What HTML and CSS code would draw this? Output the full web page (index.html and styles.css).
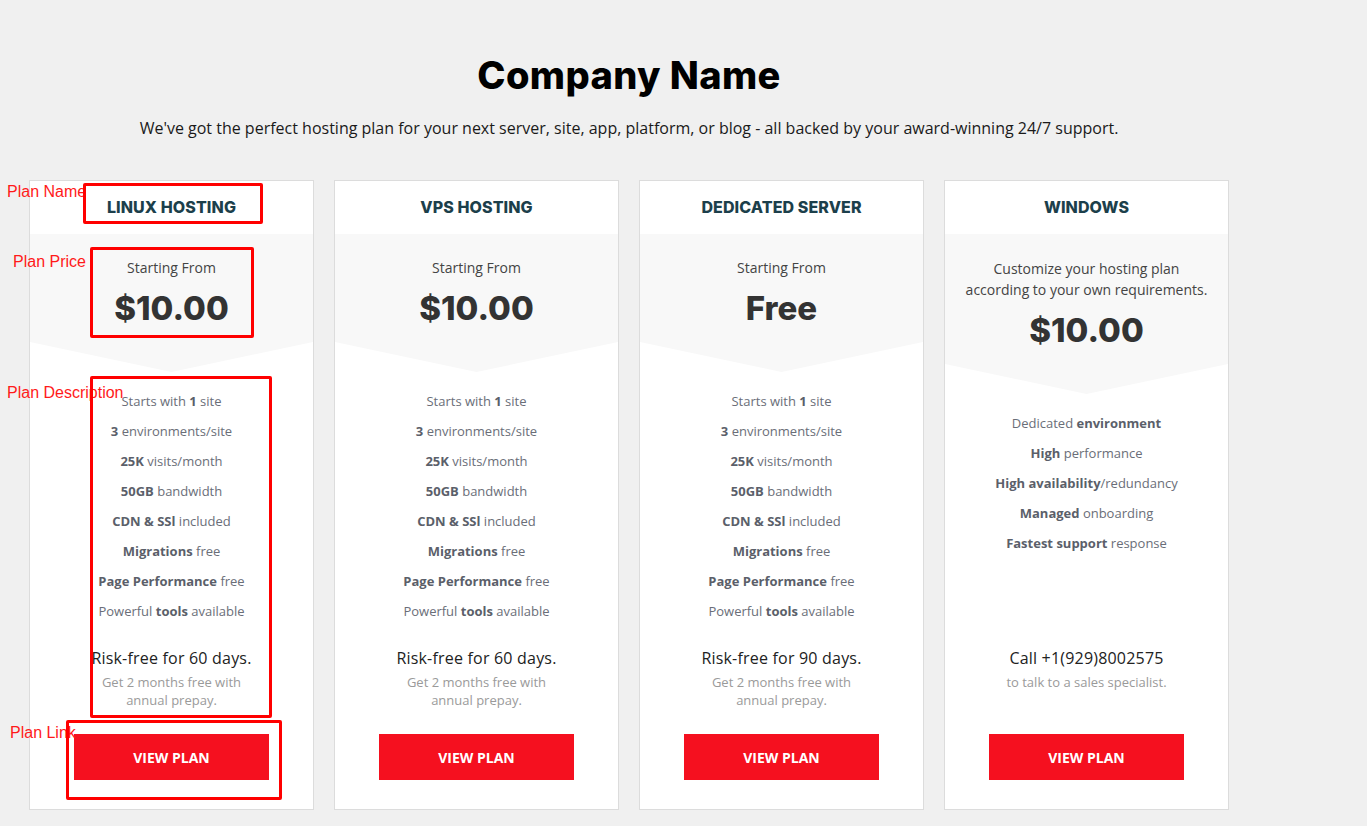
FILE: index.html
```html
<!DOCTYPE html>
<html lang="en">
<head>
<meta charset="utf-8">
<title>Company Name - Hosting Plans</title>
<link rel="stylesheet" href="styles.css">
</head>
<body>
<main class="page">
  <header class="intro">
    <h1 class="intro-title">Company Name</h1>
    <p class="intro-text">We've got the perfect hosting plan for your next server, site, app, platform, or blog - all backed by your award-winning 24/7 support.</p>
  </header>

  <section class="plans">
    <article class="plan">
      <h2 class="plan-name">LINUX HOSTING</h2>
      <div class="plan-price">
        <p class="price-note">Starting From</p>
        <p class="price-value">$10.00</p>
      </div>
      <ul class="plan-features">
        <li>Starts with <b>1</b> site</li>
        <li><b>3</b> environments/site</li>
        <li><b>25K</b> visits/month</li>
        <li><b>50GB</b> bandwidth</li>
        <li><b>CDN &amp; SSl</b> included</li>
        <li><b>Migrations</b> free</li>
        <li><b>Page Performance</b> free</li>
        <li>Powerful <b>tools</b> available</li>
      </ul>
      <div class="plan-footer">
        <div class="plan-terms">
          <p class="terms-main">Risk-free for 60 days.</p>
          <p class="terms-sub">Get 2 months free with<br>annual prepay.</p>
        </div>
        <a class="plan-button" href="#">VIEW PLAN</a>
      </div>
    </article>

    <article class="plan">
      <h2 class="plan-name">VPS HOSTING</h2>
      <div class="plan-price">
        <p class="price-note">Starting From</p>
        <p class="price-value">$10.00</p>
      </div>
      <ul class="plan-features">
        <li>Starts with <b>1</b> site</li>
        <li><b>3</b> environments/site</li>
        <li><b>25K</b> visits/month</li>
        <li><b>50GB</b> bandwidth</li>
        <li><b>CDN &amp; SSl</b> included</li>
        <li><b>Migrations</b> free</li>
        <li><b>Page Performance</b> free</li>
        <li>Powerful <b>tools</b> available</li>
      </ul>
      <div class="plan-footer">
        <div class="plan-terms">
          <p class="terms-main">Risk-free for 60 days.</p>
          <p class="terms-sub">Get 2 months free with<br>annual prepay.</p>
        </div>
        <a class="plan-button" href="#">VIEW PLAN</a>
      </div>
    </article>

    <article class="plan">
      <h2 class="plan-name">DEDICATED SERVER</h2>
      <div class="plan-price">
        <p class="price-note">Starting From</p>
        <p class="price-value">Free</p>
      </div>
      <ul class="plan-features">
        <li>Starts with <b>1</b> site</li>
        <li><b>3</b> environments/site</li>
        <li><b>25K</b> visits/month</li>
        <li><b>50GB</b> bandwidth</li>
        <li><b>CDN &amp; SSl</b> included</li>
        <li><b>Migrations</b> free</li>
        <li><b>Page Performance</b> free</li>
        <li>Powerful <b>tools</b> available</li>
      </ul>
      <div class="plan-footer">
        <div class="plan-terms">
          <p class="terms-main">Risk-free for 90 days.</p>
          <p class="terms-sub">Get 2 months free with<br>annual prepay.</p>
        </div>
        <a class="plan-button" href="#">VIEW PLAN</a>
      </div>
    </article>

    <article class="plan">
      <h2 class="plan-name">WINDOWS</h2>
      <div class="plan-price">
        <p class="price-note price-note-wide">Customize your hosting plan<br>according to your own requirements.</p>
        <p class="price-value">$10.00</p>
      </div>
      <ul class="plan-features">
        <li>Dedicated <b>environment</b></li>
        <li><b>High</b> performance</li>
        <li><b>High availability</b>/redundancy</li>
        <li><b>Managed</b> onboarding</li>
        <li><b>Fastest support</b> response</li>
      </ul>
      <div class="plan-footer">
        <div class="plan-terms">
          <p class="terms-main">Call +1(929)8002575</p>
          <p class="terms-sub">to talk to a sales specialist.</p>
        </div>
        <a class="plan-button" href="#">VIEW PLAN</a>
      </div>
    </article>
  </section>
</main>

<div class="notes" aria-hidden="true">
  <span class="note-label note-label-name">Plan Name</span>
  <span class="note-box note-box-name"></span>
  <span class="note-label note-label-price">Plan Price</span>
  <span class="note-box note-box-price"></span>
  <span class="note-label note-label-desc">Plan Description</span>
  <span class="note-box note-box-desc"></span>
  <span class="note-label note-label-link">Plan Link</span>
  <span class="note-box note-box-link"></span>
</div>
</body>
</html>
```

FILE: styles.css
```css
* {
  box-sizing: border-box;
}

html, body {
  margin: 0;
  padding: 0;
}

body {
  background: #f0f0f0;
  font-family: "Open Sans", "Noto Sans", sans-serif;
  color: #333;
  position: relative;
  min-height: 826px;
}

p, h1, h2, ul {
  margin: 0;
  padding: 0;
}

.page {
  width: 1200px;
  margin-left: 29px;
  padding-top: 54px;
}

.intro {
  text-align: center;
}

.intro-title {
  font-family: "Inter", "Noto Sans", sans-serif;
  font-weight: 800;
  font-size: 38px;
  line-height: 43px;
  color: #000;
  letter-spacing: 0.4px;
}

.intro-text {
  margin-top: 19px;
  font-size: 16px;
  line-height: 24px;
  color: #1a1a1a;
}

.plans {
  margin-top: 40px;
  display: grid;
  grid-template-columns: repeat(4, 285px);
  column-gap: 20px;
}

.plan {
  background: #fff;
  border: 1px solid #dcdcdc;
  display: flex;
  flex-direction: column;
  text-align: center;
  padding-bottom: 29px;
}

.plan-name {
  height: 53px;
  line-height: 53px;
  font-family: "Inter", "Noto Sans", sans-serif;
  font-weight: 800;
  font-size: 16px;
  color: #1c3f4b;
  letter-spacing: 0.1px;
}

.plan-price {
  background: #f8f8f8;
  padding: 24px 10px 42px;
  clip-path: polygon(0 0, 100% 0, 100% calc(100% - 30px), 50% 100%, 0 calc(100% - 30px));
}

.price-note {
  font-size: 14px;
  line-height: 20px;
  color: #444;
}

.price-note-wide {
  line-height: 21px;
}

.price-value {
  margin-top: 8px;
  font-family: "Inter", "Noto Sans", sans-serif;
  font-weight: 800;
  font-size: 33px;
  line-height: 44px;
  color: #333;
}

.plan-features {
  list-style: none;
  padding-top: 14px;
  flex: 1;
}

.plan-features li {
  font-size: 13px;
  line-height: 30px;
  color: #6a6e78;
}

.plan-features b {
  font-weight: 700;
  color: #5b5f6a;
}

.plan-footer {
  margin-top: 20px;
  display: flex;
  flex-direction: column;
  align-items: center;
}

.plan-terms {
  min-height: 63px;
}

.terms-main {
  font-size: 16px;
  line-height: 24px;
  color: #222;
  letter-spacing: 0.2px;
}

.terms-sub {
  margin-top: 3px;
  font-size: 13px;
  line-height: 18px;
  color: #9a9a9a;
}

.plan-button {
  margin-top: 25px;
  width: 195px;
  height: 46px;
  line-height: 47px;
  background: #f5101f;
  color: #fff;
  font-weight: 700;
  font-size: 14px;
  text-decoration: none;
}

/* annotation overlay */
.notes {
  position: absolute;
  inset: 0;
  pointer-events: none;
}

.note-label {
  position: absolute;
  font-family: "Liberation Sans", Arial, sans-serif;
  font-size: 16px;
  line-height: 18px;
  color: #ff1a1a;
  white-space: nowrap;
}

.note-box {
  position: absolute;
  border: 3px solid #ff0000;
  border-radius: 2px;
}

.note-label-name { left: 7px; top: 183px; }
.note-label-price { left: 13px; top: 253px; }
.note-label-desc { left: 7px; top: 384px; }
.note-label-link { left: 10px; top: 724px; }

.note-box-name { left: 83px; top: 183px; width: 180px; height: 41px; }
.note-box-price { left: 90px; top: 247px; width: 164px; height: 91px; }
.note-box-desc { left: 90px; top: 376px; width: 182px; height: 342px; }
.note-box-link { left: 66px; top: 720px; width: 216px; height: 80px; }
```
